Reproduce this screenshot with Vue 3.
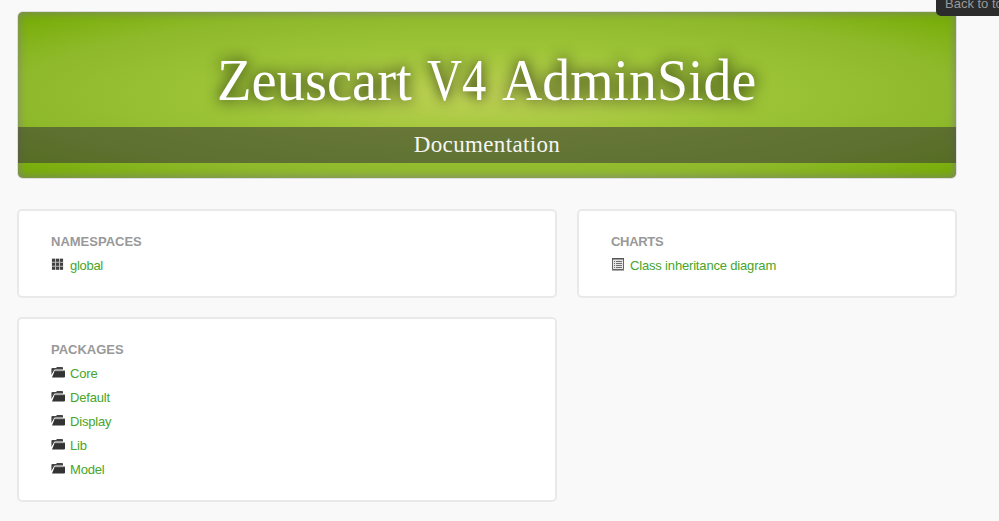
<script setup>
const packages = ['Core', 'Default', 'Display', 'Lib', 'Model']
</script>

<template>
  <main class="page">
    <header class="hero">
      <h1><span class="word first">Zeuscart</span><span class="word version">V4</span><span class="word last">AdminSide</span></h1>
      <h2><span>Documentation</span></h2>
    </header>
    <div class="columns">
      <div class="left">
        <section class="well">
          <h3>NAMESPACES</h3>
          <a class="item" href="#">
            <svg class="icon" width="14" height="14" viewBox="0 0 14 14">
              <path d="M.8.6h11.4v11.2H.8z" fill="#bbb" />
              <path d="M1 .7h3v3H1zM5 .7h3v3H5zM9 .7h3v3H9zM1 4.7h3v3H1zM5 4.7h3v3H5zM9 4.7h3v3H9zM1 8.7h3v3H1zM5 8.7h3v3H5zM9 8.7h3v3H9z" fill="#404040" />
            </svg>
            <span class="short">global</span>
          </a>
        </section>
        <section class="well">
          <h3>PACKAGES</h3>
          <a v-for="name in packages" :key="name" class="item" href="#">
            <svg class="icon" width="14" height="14" viewBox="0 0 14 14">
              <path d="M.4 9V3q0-.9.9-.9H5l1.1-1h5q.9 0 .9.9v1.5H4.1Q3.3 3.5 2.9 4.4z" fill="#444" />
              <path d="M3.8 4.8H14v5.8q0 .9-.9.9H1z" fill="#333" />
              <path d="M3.8 4.8H14v1H3.4z" fill="#4c4c4c" />
            </svg>
            <span>{{ name }}</span>
          </a>
        </section>
      </div>
      <section class="well charts">
        <h3>CHARTS</h3>
        <a class="item" href="#">
          <svg class="icon" width="14" height="14" viewBox="0 0 14 14">
            <path d="M1 0h12v13H1z" fill="#aaa" />
            <path d="M1.5.5h11v11h-11z" fill="#e6e6e6" stroke="#666" />
            <path d="M1 0h12v1.5H1z" fill="#555" />
            <path d="M3 3h1v1H3zM3 5h1v1H3zM3 7h1v1H3zM3 9h1v1H3zM5 3h6v1H5zM5 5h6v1H5zM5 7h6v1H5zM5 9h6v1H5z" fill="#707070" />
          </svg>
          <span>Class inheritance diagram</span>
        </a>
      </section>
    </div>
    <a class="to-top" href="#">Back to top</a>
  </main>
</template>

<style>
body {
  background: #f9f9f9;
  overflow: hidden;
}
</style>

<style scoped>
.page {
  box-sizing: border-box;
  width: 999px;
  height: 521px;
  padding: 11px 42px 0 17px;
  overflow: hidden;
  position: relative;
  background: #f9f9f9;
  font: 13px/24px "Liberation Sans", Arial, sans-serif;
}
.hero {
  box-sizing: border-box;
  height: 168px;
  padding-top: 34px;
  border: 1px solid rgba(0, 0, 0, 0.1);
  border-radius: 6px;
  background: radial-gradient(ellipse at center, #bfd255 0%, #9dc437 40%, #8eb92a 72%, #72aa00 100%);
  background-clip: padding-box;
  box-shadow: inset 0 0 10px gray;
  color: #fff;
  text-align: center;
  font-family: "Liberation Serif", serif;
}
h1 {
  display: flex;
  height: 70px;
  margin: 0 0 11px 199px;
  font-size: 60px;
  line-height: 69px;
  font-weight: 400;
  text-shadow: 0 0 15px rgba(0, 0, 0, 0.95);
}
.word {
  transform-origin: left;
  text-align: left;
}
.first {
  width: 210px;
  transform: scaleX(0.943);
}
.version {
  width: 75px;
  transform: scaleX(0.81);
}
.last {
  transform: scaleX(0.93);
}
h2 {
  height: 36px;
  margin: 0;
  background: rgba(58, 58, 52, 0.57);
  color: #f5f5f5;
  font-size: 23px;
  line-height: 36px;
  font-weight: 400;
  letter-spacing: 0.35px;
}
h2 span {
  display: block;
}
.columns {
  display: flex;
  align-items: flex-start;
  gap: 20px;
  margin-top: 30px;
}
.left {
  display: flex;
  flex-direction: column;
  gap: 19px;
  width: 540px;
}
.well {
  box-sizing: border-box;
  padding: 19px 32px 18px;
  border: 2px solid #e9e9e9;
  border-radius: 5px;
  background: #fff;
}
.charts {
  width: 380px;
}
.charts h3 {
  letter-spacing: -0.3px;
}
h3 {
  margin: 0;
  color: #999;
  font-size: 13px;
  line-height: 24px;
  font-weight: 700;
}
.item {
  display: flex;
  height: 24px;
  color: #46a52a;
  text-decoration: none;
  letter-spacing: -0.17px;
}
.short {
  letter-spacing: -0.3px;
}
.icon {
  flex: none;
  margin: 4px 5px 0 0;
}
.to-top {
  position: absolute;
  top: -9px;
  left: 936px;
  width: 80px;
  height: 25px;
  padding-left: 9px;
  border-radius: 5px;
  background: #2c2c2c;
  color: #999;
  font-size: 13px;
  line-height: 26px;
  text-decoration: none;
  white-space: nowrap;
}
</style>
